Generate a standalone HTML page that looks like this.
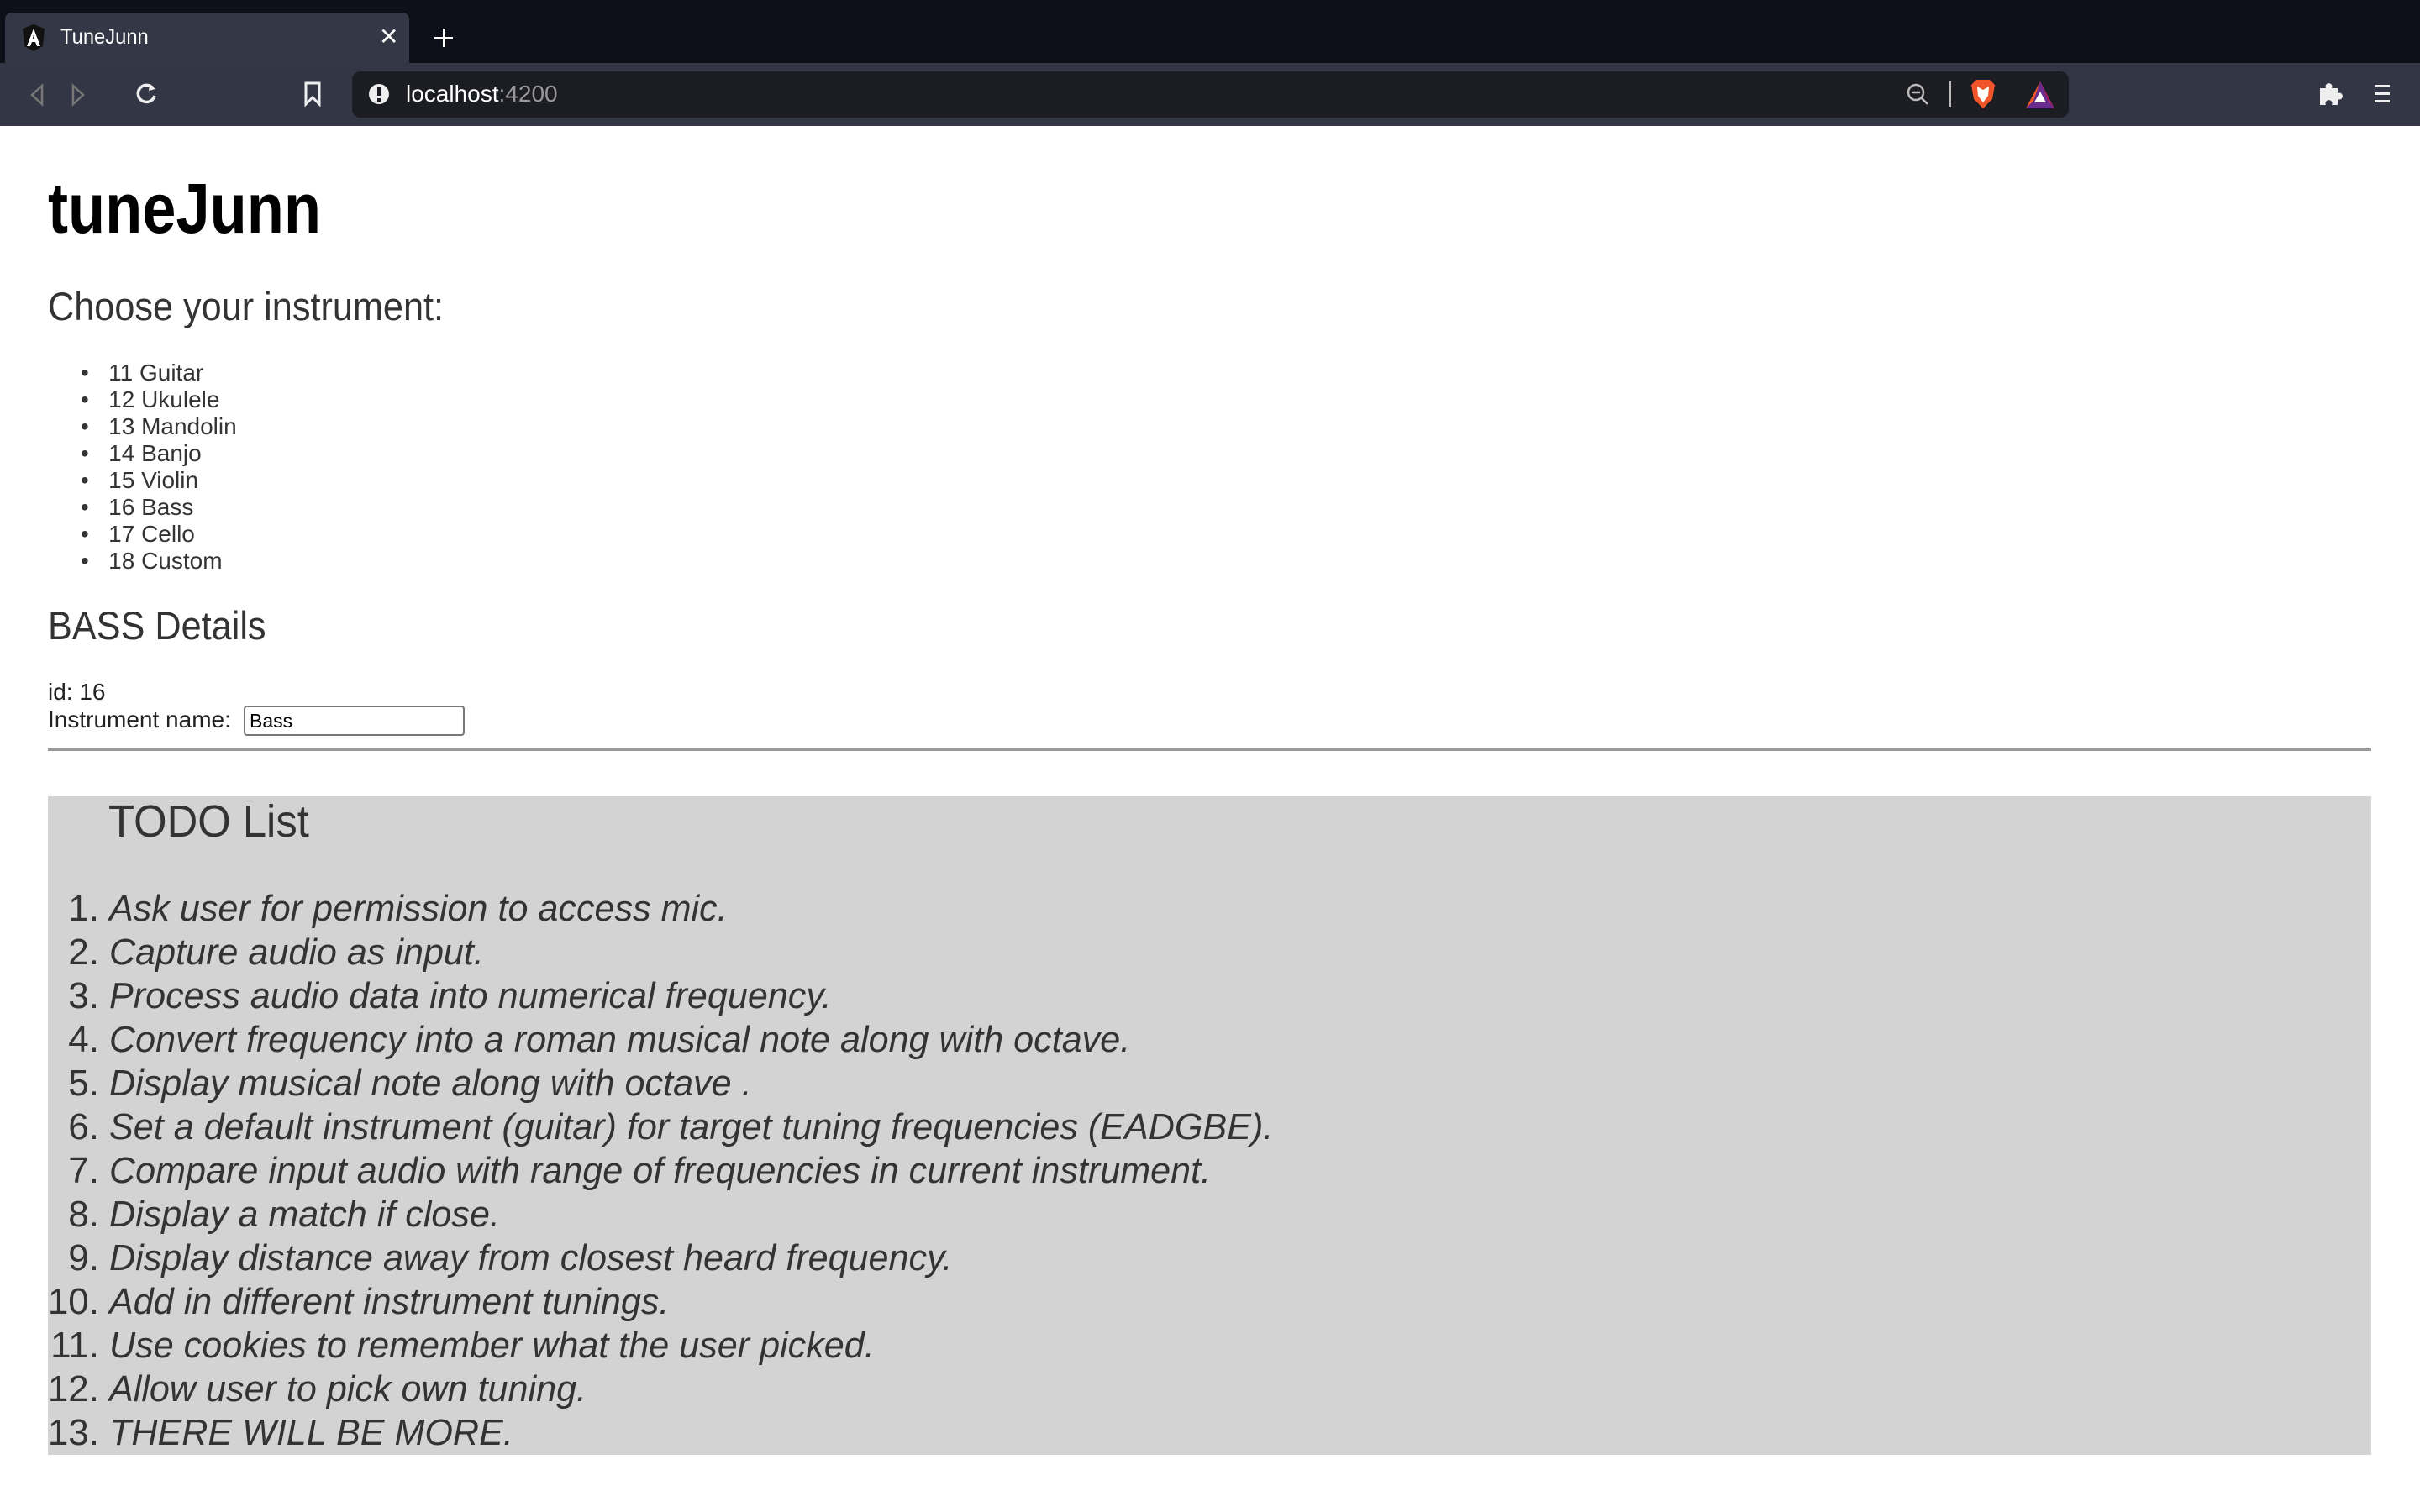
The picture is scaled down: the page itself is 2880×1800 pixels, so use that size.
<!DOCTYPE html>
<html><head><meta charset="utf-8"><style>
*{margin:0;padding:0;box-sizing:border-box}
body{width:2880px;height:1800px;background:#fff;font-family:"Liberation Sans",Arial,sans-serif;position:relative;overflow:hidden}
.a{position:absolute;white-space:nowrap}
.t{line-height:1}
.sx{transform-origin:0 0}
</style></head><body>
<!-- chrome -->
<div class="a" style="left:0;top:0;width:2880px;height:75px;background:#0e0f18"></div>
<div class="a" style="left:6px;top:15px;width:481px;height:62px;background:#343746;border-radius:8px 8px 0 0"></div>
<div class="a" style="left:0;top:75px;width:2880px;height:75px;background:#333645"></div>
<svg class="a" style="left:26px;top:28px" width="28" height="34" viewBox="0 0 28 34"><path d="M14 1 L27 6 L25 27 L14 33 L3 27 L1 6Z" fill="#111"/><path d="M14 6 L6 27 H10 L12 22 H16 L18 27 H22Z M13 18 L14 13 L15 18Z" fill="#fff"/></svg>
<div class="a t sx" style="left:72px;top:32px;font-size:25px;color:#fff;transform:scaleX(0.95)">TuneJunn</div>
<div class="a t" style="left:451px;top:30px;font-size:28px;color:#fff">✕</div>
<div class="a" style="left:517px;top:44px;width:22px;height:3px;background:#fff"></div>
<div class="a" style="left:527px;top:34px;width:3px;height:22px;background:#fff"></div>
<svg class="a" style="left:30px;top:98px" width="140" height="30" viewBox="0 0 140 30"><path d="M20 4 L8 15 L20 26Z" fill="none" stroke="#777" stroke-width="2.5"/><path d="M102 4 L114 15 L102 26Z" fill="none" stroke="#777" stroke-width="2.5" transform="translate(-45 0)"/></svg>
<svg class="a" style="left:158px;top:96px" width="32" height="32" viewBox="0 0 32 32"><path d="M24 9 A10 10 0 1 0 26 18" fill="none" stroke="#eee" stroke-width="3.5"/><path d="M20 4 L27 10 L19 12Z" fill="#eee"/></svg>
<svg class="a" style="left:361px;top:97px" width="22" height="30" viewBox="0 0 22 30"><path d="M3 2 H19 V27 L11 19 L3 27Z" fill="none" stroke="#eee" stroke-width="3"/></svg>
<div class="a" style="left:419px;top:85px;width:2043px;height:55px;background:#1c1d22;border-radius:10px"></div>
<div class="a" style="left:439px;top:100px;width:24px;height:24px;border-radius:50%;background:#eee"></div>
<div class="a" style="left:449px;top:104px;width:4px;height:10px;background:#1c1d22"></div>
<div class="a" style="left:449px;top:117px;width:4px;height:4px;background:#1c1d22"></div>
<div class="a t" style="left:483px;top:98px;font-size:28px;color:#fff">localhost<span style="color:#999">:4200</span></div>
<svg class="a" style="left:2268px;top:98px" width="30" height="30" viewBox="0 0 30 30"><circle cx="12" cy="12" r="9" fill="none" stroke="#bbb" stroke-width="2.5"/><path d="M7 12 H17 M19 19 L26 26" stroke="#bbb" stroke-width="2.5"/></svg>
<div class="a" style="left:2320px;top:97px;width:2px;height:30px;background:#bbb"></div>
<svg class="a" style="left:2344px;top:94px" width="32" height="36" viewBox="0 0 32 36"><path d="M8 1 H24 L30 7 L27 24 L16 35 L5 24 L2 7Z" fill="#f0562a"/><path d="M9 9 L16 13 L23 9 L22 20 L16 28 L10 20Z" fill="#fff"/></svg>
<svg class="a" style="left:2410px;top:96px" width="36" height="34" viewBox="0 0 36 34"><path d="M18 1 L35 33 H1Z" fill="#6a2d8f"/><path d="M18 1 L1 33 L10 24Z" fill="#f05a24"/><path d="M18 1 L35 33 L27 24Z" fill="#9e1f63"/><path d="M18 13 L25 26 H11Z" fill="#fff"/></svg>
<svg class="a" style="left:2758px;top:97px" width="30" height="30" viewBox="0 0 30 30"><path d="M3 8 H10 A4 4 0 1 1 17 8 H24 V14 A4 4 0 1 1 24 21 V28 H17 A4 4 0 1 0 10 28 H3Z" fill="#eee"/></svg>
<div class="a" style="left:2826px;top:101px;width:18px;height:3px;background:#eee"></div>
<div class="a" style="left:2826px;top:110px;width:18px;height:3px;background:#eee"></div>
<div class="a" style="left:2826px;top:119px;width:18px;height:3px;background:#eee"></div>
<!-- page -->
<div class="a t sx" style="left:57px;top:206px;font-size:84px;font-weight:bold;color:#000;transform:scaleX(0.86)">tuneJunn</div>
<div class="a t sx" style="left:57px;top:341px;font-size:47px;color:#333;transform:scaleX(0.92)">Choose your instrument:</div>
<div class="a" style="left:96px;top:428px;font-size:28px;line-height:32px;color:#333">
<div>•&nbsp;&nbsp;&nbsp;11 Guitar</div><div>•&nbsp;&nbsp;&nbsp;12 Ukulele</div><div>•&nbsp;&nbsp;&nbsp;13 Mandolin</div><div>•&nbsp;&nbsp;&nbsp;14 Banjo</div><div>•&nbsp;&nbsp;&nbsp;15 Violin</div><div>•&nbsp;&nbsp;&nbsp;16 Bass</div><div>•&nbsp;&nbsp;&nbsp;17 Cello</div><div>•&nbsp;&nbsp;&nbsp;18 Custom</div>
</div>
<div class="a t sx" style="left:57px;top:721px;font-size:47px;color:#333;transform:scaleX(0.92)">BASS Details</div>
<div class="a t" style="left:57px;top:810px;font-size:28px;color:#222">id: 16</div>
<div class="a t" style="left:57px;top:843px;font-size:28px;color:#222">Instrument name:</div>
<div class="a" style="left:290px;top:840px;width:263px;height:36px;border:2px solid #777;border-radius:4px;background:#fff"></div>
<div class="a t" style="left:297px;top:847px;font-size:23px;color:#000">Bass</div>
<div class="a" style="left:57px;top:891px;width:2765px;height:3px;background:#999"></div>
<div class="a" style="left:57px;top:948px;width:2765px;height:784px;background:#d3d3d3"></div>
<div class="a t sx" style="left:129px;top:951px;font-size:54px;color:#333;transform:scaleX(0.94)">TODO List</div>
<div class="a" style="left:0;top:1056px;width:118px;font-size:44px;line-height:52px;color:#333;text-align:right">
<div>1.</div><div>2.</div><div>3.</div><div>4.</div><div>5.</div><div>6.</div><div>7.</div><div>8.</div><div>9.</div><div>10.</div><div>11.</div><div>12.</div><div>13.</div></div>
<div class="a sx" style="left:130px;top:1056px;font-size:44px;line-height:52px;color:#333;font-style:italic;transform:scaleX(0.98)">
<div>Ask user for permission to access mic.</div>
<div>Capture audio as input.</div>
<div>Process audio data into numerical frequency.</div>
<div>Convert frequency into a roman musical note along with octave.</div>
<div>Display musical note along with octave .</div>
<div>Set a default instrument (guitar) for target tuning frequencies (EADGBE).</div>
<div>Compare input audio with range of frequencies in current instrument.</div>
<div>Display a match if close.</div>
<div>Display distance away from closest heard frequency.</div>
<div>Add in different instrument tunings.</div>
<div>Use cookies to remember what the user picked.</div>
<div>Allow user to pick own tuning.</div>
<div>THERE WILL BE MORE.</div>
</div>
</body></html>
